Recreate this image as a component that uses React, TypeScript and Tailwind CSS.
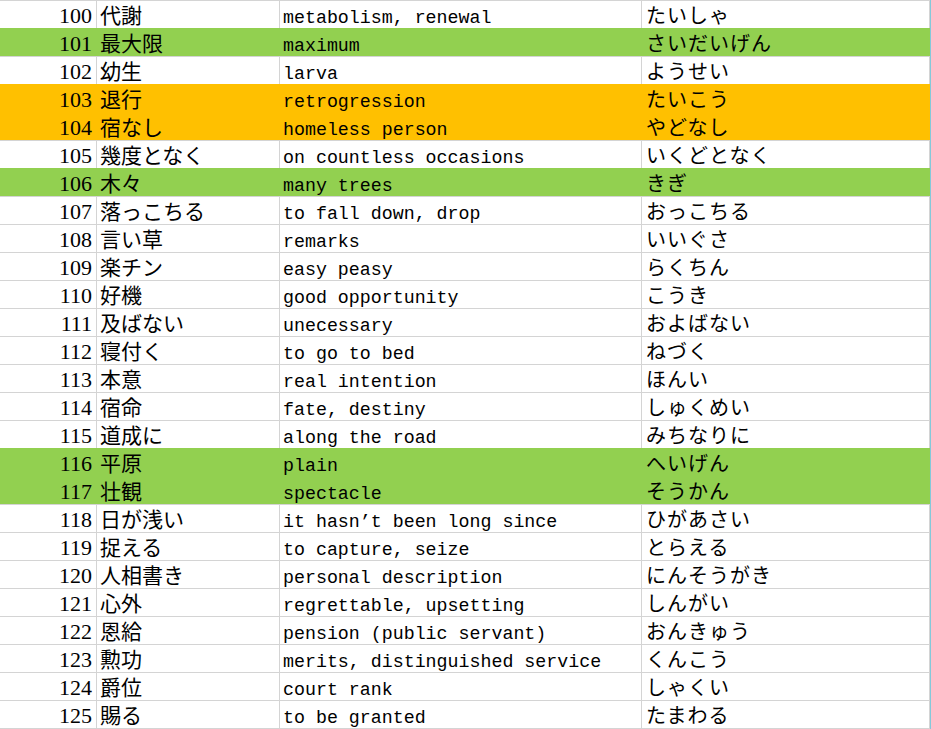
const rows: [number, string, string, string, string][] = [
  [100, "代謝", "metabolism, renewal", "たいしゃ", ""],
  [101, "最大限", "maximum", "さいだいげん", "green"],
  [102, "幼生", "larva", "ようせい", ""],
  [103, "退行", "retrogression", "たいこう", "orange"],
  [104, "宿なし", "homeless person", "やどなし", "orange"],
  [105, "幾度となく", "on countless occasions", "いくどとなく", ""],
  [106, "木々", "many trees", "きぎ", "green"],
  [107, "落っこちる", "to fall down, drop", "おっこちる", ""],
  [108, "言い草", "remarks", "いいぐさ", ""],
  [109, "楽チン", "easy peasy", "らくちん", ""],
  [110, "好機", "good opportunity", "こうき", ""],
  [111, "及ばない", "unecessary", "およばない", ""],
  [112, "寝付く", "to go to bed", "ねづく", ""],
  [113, "本意", "real intention", "ほんい", ""],
  [114, "宿命", "fate, destiny", "しゅくめい", ""],
  [115, "道成に", "along the road", "みちなりに", ""],
  [116, "平原", "plain", "へいげん", "green"],
  [117, "壮観", "spectacle", "そうかん", "green"],
  [118, "日が浅い", "it hasn’t been long since", "ひがあさい", ""],
  [119, "捉える", "to capture, seize", "とらえる", ""],
  [120, "人相書き", "personal description", "にんそうがき", ""],
  [121, "心外", "regrettable, upsetting", "しんがい", ""],
  [122, "恩給", "pension (public servant)", "おんきゅう", ""],
  [123, "勲功", "merits, distinguished service", "くんこう", ""],
  [124, "爵位", "court rank", "しゃくい", ""],
  [125, "賜る", "to be granted", "たまわる", ""],
];

const jp = { fontFamily: '"Noto Sans CJK JP", sans-serif' };

const Row = ({ r }: { r: [number, string, string, string, string] }) => {
  const fill = r[4];
  const bg =
    fill === "green" ? "bg-[#92d050]" : fill === "orange" ? "bg-[#ffc000]" : "bg-white";
  const line =
    fill === "green"
      ? "border-[#92d050]"
      : fill === "orange"
        ? "border-[#ffc000]"
        : "border-[#d4d4d4]";
  return (
    <div className={`flex h-[28px] border-t ${line} ${bg} text-black`}>
      <div
        className="w-[96px] flex items-center justify-end pr-[4px] pt-[1px] text-[22px]"
        style={{ fontFamily: '"Liberation Serif", serif' }}
      >
        {r[0]}
      </div>
      <div
        className={`w-[183px] flex items-center border-l ${line} pl-[3px] text-[21px]`}
        style={jp}
      >
        {r[1]}
      </div>
      <div
        className={`w-[362px] flex items-center border-l ${line} pl-[3px] pt-[8px] text-[18.3px] whitespace-pre`}
        style={{ fontFamily: '"Liberation Mono", monospace' }}
      >
        {r[2]}
      </div>
      <div
        className={`w-[288px] flex items-center border-l ${line} pl-[4px] text-[20px] tracking-[1px]`}
        style={jp}
      >
        {r[3]}
      </div>
      <div className={`w-[1px] border-l ${line}`} />
    </div>
  );
};

export default function App() {
  return (
    <div className="w-[931px] h-[729px] overflow-hidden bg-white flex">
      <div className="w-[930px]">
        {rows.map((r) => (
          <Row key={r[0]} r={r} />
        ))}
        <div className="border-t border-[#d4d4d4]" />
      </div>
      <div className="w-[1px] bg-[#84c9da]" />
    </div>
  );
}
